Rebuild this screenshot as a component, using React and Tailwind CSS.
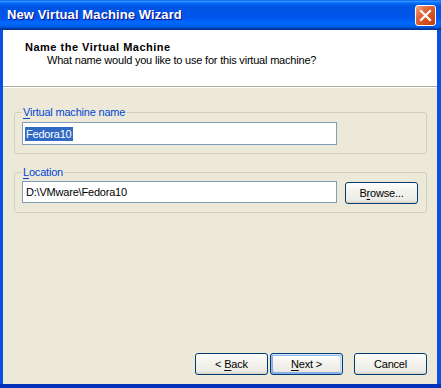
import React from "react";

const titleGradient =
  "bg-[linear-gradient(180deg,#0058ee_0%,#3593ff_4%,#288eff_6%,#127dff_8%,#036ffc_10%,#0262ee_14%,#0057e5_20%,#0054e3_24%,#0055eb_56%,#005bf5_66%,#026afe_76%,#0062ef_86%,#0052d6_92%,#0040ab_94%,#003092_100%)]";

const btnBase =
  "h-[22px] w-[73px] rounded-[3px] border border-[#003c74] bg-[linear-gradient(180deg,#ffffff_0%,#f4f3ee_40%,#ecebe6_86%,#d6d0c5_100%)] text-[11px] tracking-[-0.2px] text-black flex items-center justify-center";

const defaultRing =
  "shadow-[inset_-1px_1px_#cee7ff,inset_1px_2px_#98b8ea,inset_-2px_2px_#bcd4f6,inset_1px_-1px_#89ade4,inset_2px_-2px_#89ade4]";

const CloseButton = () => (
  <div className="w-[21px] h-[21px] rounded-[3px] border border-white bg-[linear-gradient(135deg,#f3a282_0%,#e2673b_35%,#d4501f_65%,#c03e12_100%)] flex items-center justify-center">
    <svg width="13" height="13" viewBox="0 0 13 13">
      <path d="M2 2 L11 11 M11 2 L2 11" stroke="white" strokeWidth="2.2" strokeLinecap="square" />
    </svg>
  </div>
);

const GroupBox = ({ label, mnemonic, className, children }) => (
  <fieldset className={`border border-[#d0d0bf] rounded-[3px] px-[7px] pb-[8px] ${className}`}>
    <legend className="px-[1px] text-[11px] leading-[13px] tracking-[-0.2px] text-[#0046d5]">
      <span className="underline underline-offset-[2px]">{mnemonic}</span>
      {label}
    </legend>
    {children}
  </fieldset>
);

const TextBox = ({ tall, children }) => (
  <div
    className={`w-[315px] ${tall ? "h-[23px]" : "h-[22px]"} border border-[#7f9db9] bg-white flex items-center pl-[2px] text-[11px] tracking-[-0.2px] text-black leading-[14px]`}
  >
    {children}
  </div>
);

const App = () => {
  return (
    <div className="w-[441px] h-[388px] flex flex-col bg-[#0a4fe2] border-b-[4px] border-[#0033b8] font-['Liberation_Sans',Arial,sans-serif] select-none">
      <div className={`h-[30px] flex items-center pl-[7px] pr-[5px] ${titleGradient}`}>
        <span className="flex-1 text-white font-bold text-[13px] tracking-[0.1px] [text-shadow:1px_1px_0_#0f1089]">
          New Virtual Machine Wizard
        </span>
        <CloseButton />
      </div>

      <div className="flex-1 flex flex-col ml-[3px] mr-[4px] bg-[#ece9d8]">
        <div className="h-[57px] bg-white pt-[11px] pl-[22px] border-b border-[#aca899]">
          <p className="font-bold text-[11px] leading-[13px] tracking-[0.5px] text-black">
            Name the Virtual Machine
          </p>
          <p className="pl-[22px] text-[11px] leading-[13px] tracking-[-0.2px] text-black">
            What name would you like to use for this virtual machine?
          </p>
        </div>
        <div className="h-px bg-white" />

        <div className="flex-1 flex flex-col pt-[18px] pl-[11px] pr-[10px]">
          <GroupBox mnemonic="V" label="irtual machine name" className="pt-[3px]">
            <TextBox tall>
              <span className="bg-[#316ac5] text-white px-[1px]">Fedora10</span>
            </TextBox>
          </GroupBox>

          <GroupBox mnemonic="L" label="ocation" className="mt-[12px] pt-[2px]">
            <div className="flex items-start gap-[8px]">
              <TextBox>
                <span className="px-[1px]">D:\VMware\Fedora10</span>
              </TextBox>
              <div className={`${btnBase} mt-[1px] h-[21px]`}>
                B<span className="underline underline-offset-[2px]">r</span>owse...
              </div>
            </div>
          </GroupBox>

          <div className="flex-1" />

          <div className="flex justify-end pb-[9px]">
            <div className={btnBase}>
              &lt;&nbsp;<span className="underline underline-offset-[2px]">B</span>ack
            </div>
            <div className={`${btnBase} ${defaultRing} ml-[2px]`}>
              <span className="underline underline-offset-[2px]">N</span>ext&nbsp;&gt;
            </div>
            <div className={`${btnBase} ml-[11px]`}>Cancel</div>
          </div>
        </div>
      </div>
    </div>
  );
};

export default App;
